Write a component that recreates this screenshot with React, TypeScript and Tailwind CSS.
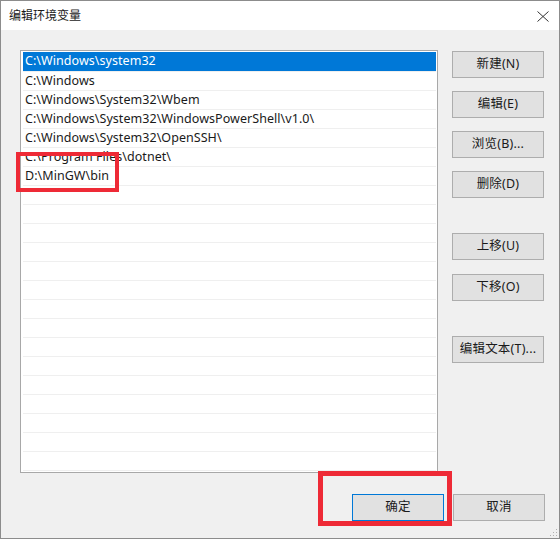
import { ReactNode } from 'react';

const paths = [
  'C:\\Windows\\system32',
  'C:\\Windows',
  'C:\\Windows\\System32\\Wbem',
  'C:\\Windows\\System32\\WindowsPowerShell\\v1.0\\',
  'C:\\Windows\\System32\\OpenSSH\\',
  'C:\\Program Files\\dotnet\\',
  'D:\\MinGW\\bin',
];

const font = { fontFamily: '"Noto Sans", "Noto Sans CJK SC", sans-serif' };

const WinButton = ({ children, className = '' }: { children: ReactNode; className?: string }) => (
  <button
    className={
      'h-[27px] w-[92px] border border-[#adadad] bg-[#e1e1e1] text-[12.5px] leading-none tracking-[0.2px] text-[#1a1a1a] ' +
      className
    }
  >
    {children}
  </button>
);

const App = () => {
  // pad list with empty rows to fill the box
  const rows = [...paths, ...Array(16).fill('')];

  return (
    <div
      className="relative flex h-[539px] w-[560px] flex-col overflow-hidden border border-[#8c8c8c] bg-[#f0f0f0]"
      style={font}
    >
      {/* Title bar */}
      <div className="flex h-[29px] shrink-0 items-center justify-between bg-white pl-2 pr-[10px]">
        <span className="text-[12px] text-[#1a1a1a]">编辑环境变量</span>
        <svg width="12" height="11" viewBox="0 0 12 11" className="mt-[1px]">
          <path d="M0.5 0.5 L11.5 10.5 M11.5 0.5 L0.5 10.5" stroke="#333" strokeWidth="1" fill="none" />
        </svg>
      </div>

      {/* Body */}
      <div className="flex flex-1 flex-col pl-[19px] pr-[14px] pt-[20px]">
        <div className="flex gap-[14px]">
          {/* Path list */}
          <div className="h-[423px] w-[418px] overflow-hidden border border-[#a8a8a8] bg-white pl-[2px] pr-[1px] pt-[1px]">
            {rows.map((p, i) => (
              <div
                key={i}
                className={
                  i === 0
                    ? 'flex h-[19px] items-center bg-[#0078d7] pl-[2px] text-[12.5px] tracking-[0.05px] text-white'
                    : 'flex h-[19px] items-center border-t border-[#efefef] pl-[2px] text-[12.5px] tracking-[0.05px] text-[#1a1a1a]'
                }
              >
                {p}
              </div>
            ))}
          </div>

          {/* Side buttons */}
          <div className="flex flex-col pt-[1px]">
            <div className="flex flex-col gap-[13px]">
              <WinButton>新建(N)</WinButton>
              <WinButton>编辑(E)</WinButton>
              <WinButton>浏览(B)...</WinButton>
              <WinButton>删除(D)</WinButton>
            </div>
            <div className="mt-[35px] flex flex-col gap-[14px]">
              <WinButton>上移(U)</WinButton>
              <WinButton>下移(O)</WinButton>
            </div>
            <div className="mt-[34px]">
              <WinButton>编辑文本(T)...</WinButton>
            </div>
          </div>
        </div>

        {/* Footer buttons */}
        <div className="mt-[21px] flex justify-end gap-[9px]">
          <WinButton className="!border-[#0078d7]">确定</WinButton>
          <WinButton>取消</WinButton>
        </div>
      </div>

      {/* size grip */}
      <svg width="8" height="8" viewBox="0 0 8 8" className="absolute bottom-[1px] right-[1px]">
        <rect x="6" y="0" width="1" height="1" fill="#b0b0b0" />
        <rect x="3" y="3" width="1" height="1" fill="#b0b0b0" />
        <rect x="6" y="3" width="1" height="1" fill="#b0b0b0" />
        <rect x="0" y="6" width="1" height="1" fill="#b0b0b0" />
        <rect x="3" y="6" width="1" height="1" fill="#b0b0b0" />
        <rect x="6" y="6" width="1" height="1" fill="#b0b0b0" />
      </svg>

      {/* Red annotation boxes */}
      <div className="pointer-events-none absolute left-[15px] top-[151px] h-[40px] w-[103px] border-[4px] border-[#ee2a36]" />
      <div className="pointer-events-none absolute left-[317px] top-[470px] h-[55px] w-[134px] border-[5px] border-[#ee2a36]" />
    </div>
  );
};

export default App;
